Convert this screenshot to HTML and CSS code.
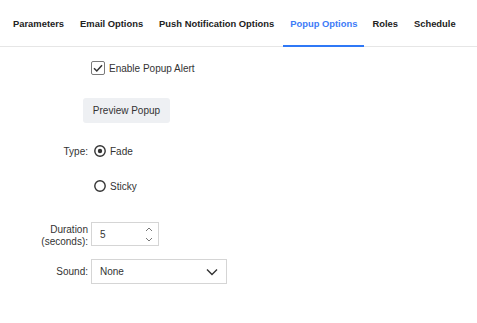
FILE: index.html
```html
<!DOCTYPE html>
<html>
<head>
<meta charset="utf-8">
<link rel="stylesheet" href="styles.css">
</head>
<body>
<nav class="tabs">
  <a class="tab">Parameters</a>
  <a class="tab">Email Options</a>
  <a class="tab">Push Notification Options</a>
  <a class="tab active">Popup Options</a>
  <a class="tab">Roles</a>
  <a class="tab">Schedule</a>
</nav>
<main class="form">
  <div class="row check-row">
    <span class="label"></span>
    <label class="check">
      <svg class="box" width="14" height="14" viewBox="0 0 14 14"><rect x="0.5" y="0.5" width="13" height="13" rx="1.5" fill="#fff" stroke="#7a7a7a"/><path d="M3 7.2 L5.8 10 L11 4.2" fill="none" stroke="#333" stroke-width="1.5"/></svg>
      <span>Enable Popup Alert</span>
    </label>
  </div>
  <div class="btn-row">
    <button class="btn">Preview Popup</button>
  </div>
  <div class="row type-row">
    <span class="label">Type:</span>
    <label class="radio">
      <svg width="12" height="12" viewBox="0 0 12 12"><circle cx="6" cy="6" r="5.2" fill="#fff" stroke="#333" stroke-width="1.4"/><circle cx="6" cy="6" r="2.2" fill="#333"/></svg>
      <span>Fade</span>
    </label>
  </div>
  <div class="row sticky-row">
    <span class="label"></span>
    <label class="radio">
      <svg width="12" height="12" viewBox="0 0 12 12"><circle cx="6" cy="6" r="5.2" fill="#fff" stroke="#333" stroke-width="1.4"/></svg>
      <span>Sticky</span>
    </label>
  </div>
  <div class="row dur-row">
    <span class="label two">Duration<br>(seconds):</span>
    <div class="num">
      <span>5</span>
      <span class="spin">
        <svg width="8" height="5" viewBox="0 0 8 5"><path d="M1 4 L4 1 L7 4" fill="none" stroke="#777" stroke-width="1"/></svg>
        <svg width="8" height="5" viewBox="0 0 8 5"><path d="M1 1 L4 4 L7 1" fill="none" stroke="#777" stroke-width="1"/></svg>
      </span>
    </div>
  </div>
  <div class="row sound-row">
    <span class="label">Sound:</span>
    <div class="select">
      <span>None</span>
      <svg width="12" height="8" viewBox="0 0 12 8"><path d="M1 1.5 L6 6.5 L11 1.5" fill="none" stroke="#333" stroke-width="1.4"/></svg>
    </div>
  </div>
</main>
</body>
</html>
```
FILE: styles.css
```css
* { box-sizing: border-box; }
body {
  margin: 0;
  font-family: "Liberation Sans", Arial, sans-serif;
  font-size: 10px;
  color: #333;
  background: #fff;
}
.tabs {
  display: flex;
  height: 47px;
  padding-left: 5px;
  border-bottom: 1px solid #e6e6e6;
}
.tab {
  display: flex;
  align-items: center;
  flex: none;
  white-space: nowrap;
  padding: 1px 8px 0;
  font-size: 9.4px;
  font-weight: bold;
  color: #222;
  border-bottom: 2px solid transparent;
  margin-bottom: -1px;
}
.tab.active {
  color: #3d7bf7;
  border-bottom-color: #2f78f6;
  padding: 1px 7px 0;
  margin-left: 1px;
  margin-right: 0;
}
.form {
  display: flex;
  flex-direction: column;
}
.row {
  display: flex;
  align-items: center;
}
.label {
  width: 88px;
  text-align: right;
  color: #333;
  flex: none;
}
.label.two { line-height: 12px; padding-top: 2px; }
.check-row { margin-top: 13px; height: 16px; }
.check, .radio {
  display: flex;
  align-items: center;
  margin-left: 3px;
}
.check .box { margin-right: 4px; }
.radio svg { margin-left: 3px; margin-right: 4px; }
.btn-row { margin-top: 22px; padding-left: 83px; }
.btn {
  height: 25px;
  width: 87px;
  border: none;
  border-radius: 3px;
  background: #eef0f3;
  color: #333;
  font-family: inherit;
  font-size: 10px;
  padding: 0;
}
.type-row { margin-top: 20px; height: 16px; }
.sticky-row { margin-top: 19px; height: 16px; }
.dur-row { margin-top: 28px; align-items: flex-start; }
.num {
  margin-left: 3px;
  width: 68px;
  height: 24px;
  border: 1px solid #d5d5d5;
  display: flex;
  align-items: center;
  justify-content: space-between;
  padding: 0 5px 0 8px;
}
.spin {
  display: flex;
  flex-direction: column;
  gap: 5px;
}
.spin svg { display: block; }
.sound-row { margin-top: 11px; }
.select {
  margin-left: 3px;
  width: 136px;
  height: 25px;
  border: 1px solid #d5d5d5;
  display: flex;
  align-items: center;
  justify-content: space-between;
  padding: 0 8px 0 8px;
}
```
